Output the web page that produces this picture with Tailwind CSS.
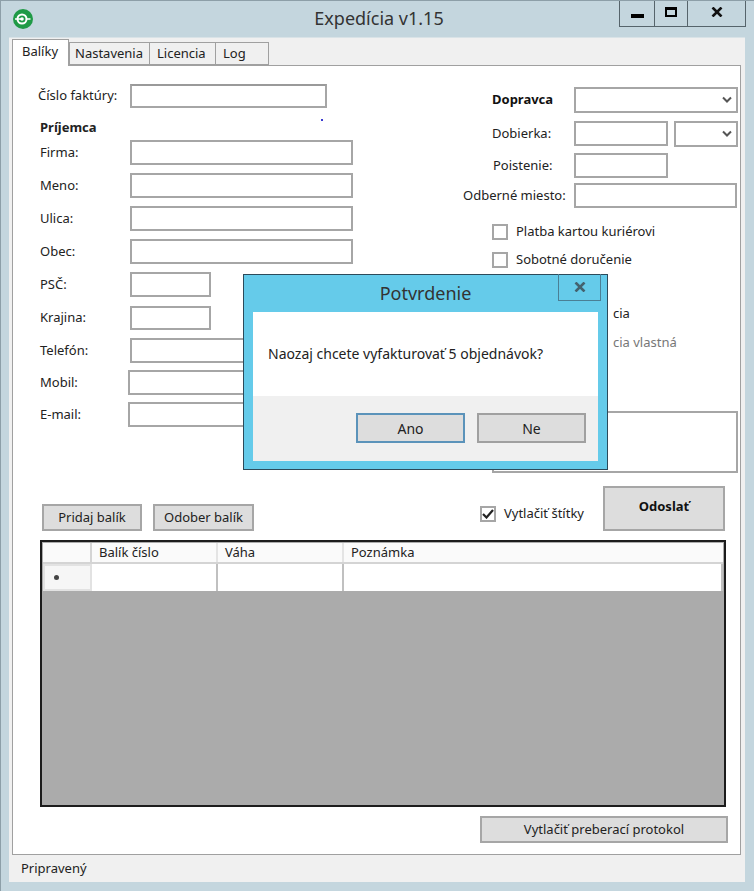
<!doctype html>
<html lang="sk">
  <head>
    <meta charset="UTF-8">
    <title>Expedícia v1.15</title>
    <script src="https://cdn.jsdelivr.net/npm/@tailwindcss/browser@4"></script>
  </head>
  <body class="bg-[#c4d6de]">
    <div class="relative w-[754px] h-[891px] overflow-hidden flex flex-col bg-[#c4d6de] border-t border-l border-[#8d9fa8] font-['Noto_Sans',sans-serif] text-[13px] text-[#222]">

      <!-- title bar -->
      <div class="relative flex h-[36px] shrink-0 items-center pl-[11px]">
        <svg width="22" height="22" viewBox="0 0 22 22">
          <circle cx="11" cy="11" r="10" fill="#1f9a46"/>
          <circle cx="10" cy="11" r="4.5" fill="none" stroke="#fff" stroke-width="2"/>
          <path d="M3 11h7M14.500 11h4" stroke="#fff" stroke-width="1.500"/>
          <circle cx="10" cy="11" r="1.800" fill="#fff"/>
        </svg>
        <div class="flex-1 text-center text-[18px] pr-[30px] text-[#333] -mt-[1px]">Expedícia v1.15</div>
        <div class="absolute right-[8px] top-[-1px] flex h-[27px] border border-t-0 border-[#56646b]">
          <div class="flex w-[35px] items-center justify-center border-r border-[#56646b]"><div class="w-[13px] h-[4px] bg-black mt-[5px]"></div></div>
          <div class="flex w-[33px] items-center justify-center border-r border-[#56646b]"><div class="w-[12px] h-[10px] border-2 border-t-[3px] border-black -mt-[2px]"></div></div>
          <div class="flex w-[57px] items-center justify-center text-[#111] -mt-[2px]">
            <svg width="12" height="10" viewBox="0 0 12 10"><path d="M1.500 .5 10.500 9.500M10.500 .5 1.500 9.500" stroke="#111" stroke-width="2.600"/></svg>
          </div>
        </div>
      </div>

      <!-- client area -->
      <div class="ml-[8px] w-[736px] h-[845px] flex flex-col bg-[#f0f0f0] border-t border-[#d9e3e7]">
        <!-- tabs -->
        <div class="flex h-[27px] shrink-0 items-end pl-[3px]">
          <div class="relative z-10 flex w-[57px] h-[27px] -mb-[1px] bg-white border border-b-0 border-[#a0a0a0] pl-[9px] pt-[2px]">Balíky</div>
          <div class="flex w-[81px] h-[23px] items-center border border-[#a0a0a0] pl-[5px] bg-[#f0f0f0]">Nastavenia</div>
          <div class="flex w-[66px] h-[23px] items-center border border-l-0 border-[#a0a0a0] pl-[7px] bg-[#f0f0f0]">Licencia</div>
          <div class="flex w-[53px] h-[23px] items-center border border-l-0 border-[#a0a0a0] pl-[7px] bg-[#f0f0f0]">Log</div>
        </div>

        <!-- tab panel -->
        <div class="ml-[3px] w-[729px] h-[790px] shrink-0 flex flex-col bg-white border border-[#a0a0a0]">
          <div class="flex h-[419px] shrink-0">
            <!-- left column -->
            <div class="w-[427px] shrink-0 pl-[27px] pt-[18px]">
              <div class="flex h-[24px]">
                <label class="w-[92px] -ml-[2px] pl-0 self-center">Číslo faktúry:</label>
                <div class="w-[197px] border-2 border-[#a6a6a6] border-t-[#9a9a9a]"></div>
              </div>
              <div class="flex h-[32px] w-[288px] pt-[7px] font-bold items-center">
                <span>Príjemca</span>
                <div class="ml-auto mr-[5px] mb-[16px] w-[2px] h-[2px] bg-[#3a3ad0]"></div>
              </div>
              <div class="flex h-[25px]">
                <label class="w-[90px] self-center">Firma:</label>
                <div class="w-[223px] border-2 border-[#a6a6a6]"></div>
              </div>
              <div class="flex h-[25px] mt-[8px]">
                <label class="w-[90px] self-center">Meno:</label>
                <div class="w-[223px] border-2 border-[#a6a6a6]"></div>
              </div>
              <div class="flex h-[25px] mt-[8px]">
                <label class="w-[90px] self-center">Ulica:</label>
                <div class="w-[223px] border-2 border-[#a6a6a6]"></div>
              </div>
              <div class="flex h-[25px] mt-[8px]">
                <label class="w-[90px] self-center">Obec:</label>
                <div class="w-[223px] border-2 border-[#a6a6a6]"></div>
              </div>
              <div class="flex h-[25px] mt-[8px]">
                <label class="w-[90px] self-center">PSČ:</label>
                <div class="w-[81px] border-2 border-[#a6a6a6]"></div>
              </div>
              <div class="flex h-[24px] mt-[9px]">
                <label class="w-[90px] self-center">Krajina:</label>
                <div class="w-[81px] border-2 border-[#a6a6a6]"></div>
              </div>
              <div class="flex h-[25px] mt-[8px]">
                <label class="w-[90px] self-center">Telefón:</label>
                <div class="w-[223px] border-2 border-[#a6a6a6]"></div>
              </div>
              <div class="flex h-[25px] mt-[7px]">
                <label class="w-[88px] self-center">Mobil:</label>
                <div class="w-[225px] border-2 border-[#a6a6a6]"></div>
              </div>
              <div class="flex h-[25px] mt-[7px]">
                <label class="w-[88px] self-center">E-mail:</label>
                <div class="w-[225px] border-2 border-[#a6a6a6]"></div>
              </div>
            </div>

            <!-- right column -->
            <div class="w-[300px] shrink-0 pt-[21px]">
              <div class="flex h-[26px]">
                <label class="w-[134px] pl-[52px] self-center font-bold text-[#111]">Dopravca</label>
                <div class="flex w-[164px] items-center justify-end pr-[3px] border-2 border-[#a6a6a6]">
                  <svg width="12" height="8" viewBox="0 0 12 8"><path d="M2 1.500 6 5.500 10 1.500" fill="none" stroke="#555" stroke-width="2"/></svg>
                </div>
              </div>
              <div class="flex h-[26px] mt-[8px]">
                <label class="w-[134px] pl-[52px] self-center">Dobierka:</label>
                <div class="w-[94px] h-[25px] border-2 border-[#a6a6a6]"></div>
                <div class="flex w-[64px] ml-[6px] items-center justify-end pr-[3px] border-2 border-[#a6a6a6]">
                  <svg width="12" height="8" viewBox="0 0 12 8"><path d="M2 1.500 6 5.500 10 1.500" fill="none" stroke="#555" stroke-width="2"/></svg>
                </div>
              </div>
              <div class="flex h-[25px] mt-[6px]">
                <label class="w-[134px] pl-[53px] self-center">Poistenie:</label>
                <div class="w-[94px] border-2 border-[#a6a6a6]"></div>
              </div>
              <div class="flex h-[25px] mt-[5px]">
                <label class="w-[134px] pl-[23px] self-center">Odberné miesto:</label>
                <div class="w-[163px] border-2 border-[#a6a6a6]"></div>
              </div>
              <div class="flex items-center h-[17px] mt-[15px] pl-[52px]">
                <div class="w-[16px] h-[16px] border-2 border-[#a6a6a6]"></div>
                <span class="ml-[8px]">Platba kartou kuriérovi</span>
              </div>
              <div class="flex items-center h-[17px] mt-[11px] pl-[52px]">
                <div class="w-[16px] h-[16px] border-2 border-[#a6a6a6]"></div>
                <span class="ml-[8px]">Sobotné doručenie</span>
              </div>
              <div class="h-[18px] mt-[36px] pl-[173px]">cia</div>
              <div class="h-[18px] mt-[11px] pl-[173px] text-[#777]">cia vlastná</div>
              <div class="w-[246px] h-[62px] ml-[52px] mt-[60px] border-2 border-[#a6a6a6]"></div>
            </div>
          </div>

          <!-- buttons above the grid -->
          <div class="flex h-[46px] shrink-0 items-end pl-[29px]">
            <button class="w-[100px] h-[27px] bg-[#dddddd] border-2 border-[#a6a6a6]">Pridaj balík</button>
            <button class="w-[101px] h-[27px] ml-[11px] bg-[#dddddd] border-2 border-[#a6a6a6]">Odober balík</button>
            <div class="flex items-center h-[17px] ml-[226px] mb-[9px]">
              <div class="flex w-[16px] h-[16px] items-center justify-center border-2 border-[#a6a6a6]">
                <svg width="12" height="10" viewBox="0 0 12 10"><path d="M1 5 4.500 8.500 11 1" fill="none" stroke="#222" stroke-width="2.200"/></svg>
              </div>
              <span class="ml-[8px]">Vytlačiť štítky</span>
            </div>
            <button class="w-[122px] h-[45px] ml-[19px] mb-0 bg-[#dddddd] border-2 border-[#a6a6a6] font-bold text-[#111] pb-[4px]">Odoslať</button>
          </div>

          <!-- grid -->
          <div class="flex flex-col w-[686px] h-[267px] ml-[27px] mt-[9px] shrink-0 bg-[#ababab] border-2 border-[#1c1c1c]">
            <div class="flex h-[21px] ml-[1px] mt-[1px] mr-[1px] bg-[#fafafa] border-b-2 border-[#d4d4d4]">
              <div class="w-[49px] border-r-2 border-[#d4d4d4]"></div>
              <div class="w-[126px] pl-[7px] border-r-2 border-[#e4e4e4]">Balík číslo</div>
              <div class="w-[126px] pl-[7px] border-r-2 border-[#e4e4e4]">Váha</div>
              <div class="flex-1 pl-[7px]">Poznámka</div>
            </div>
            <div class="flex h-[27px] ml-[1px] mr-[1px] bg-white">
              <div class="flex w-[49px] items-center pl-[9px] bg-[#f6f6f6] border-2 border-[#e2e2e2]"><div class="w-[5px] h-[5px] rounded-full bg-[#444]"></div></div>
              <div class="w-[126px] border-r-2 border-[#c0c0c0]"></div>
              <div class="w-[126px] border-r-2 border-[#c0c0c0]"></div>
              <div class="flex-1 border-r-2 border-[#c0c0c0]"></div>
            </div>
          </div>

          <button class="w-[248px] h-[27px] ml-[467px] mt-[9px] shrink-0 bg-[#dddddd] border-2 border-[#a6a6a6]">Vytlačiť preberací protokol</button>
        </div>

        <!-- status bar -->
        <div class="flex flex-1 items-center pl-[12px]">Pripravený</div>
      </div>

      <!-- confirm dialog -->
      <div class="absolute left-[242px] top-[273px] w-[365px] h-[196px] flex flex-col bg-[#65cbea] border border-[#2c4a5a] px-[9px] pb-[8px]">
        <div class="relative flex h-[38px] shrink-0 items-center justify-center text-[18px] text-[#333] -mt-[1px]">
          Potvrdenie
          <div class="absolute right-[-3px] top-0 flex w-[43px] h-[27px] items-center justify-center border border-t-0 border-[#4a7f95]">
            <svg width="12" height="10" viewBox="0 0 12 10"><path d="M1.500 .5 10.500 9.500M10.500 .5 1.500 9.500" stroke="#44626f" stroke-width="2.600"/></svg>
          </div>
        </div>
        <div class="flex h-[84px] shrink-0 items-center bg-white pl-[15px] text-[14px] pb-[1px]">Naozaj chcete vyfakturovať 5 objednávok?</div>
        <div class="flex flex-1 bg-[#f0f0f0] pl-[103px] pt-[17px] text-[14px]">
          <button class="w-[109px] h-[30px] bg-[#dddddd] border-2 border-[#5b93ba]">Ano</button>
          <button class="w-[109px] h-[30px] ml-[12px] bg-[#dddddd] border-2 border-[#a0a0a0]">Ne</button>
        </div>
      </div>
    </div>
  </body>
</html>
